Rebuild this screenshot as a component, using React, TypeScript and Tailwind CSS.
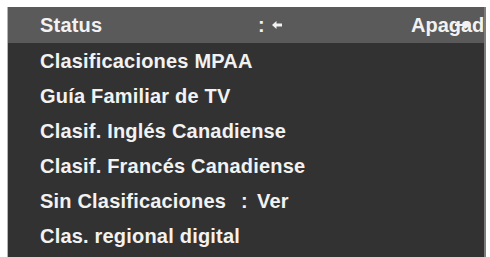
const rows = [
  "Clasificaciones MPAA",
  "Guía Familiar de TV",
  "Clasif. Inglés Canadiense",
  "Clasif. Francés Canadiense",
];

function LeftArrow() {
  return (
    <svg width="10" height="8" viewBox="0 0 10 8" className="shrink-0">
      <path d="M0 4 L4.5 0 L4.5 2.6 L10 2.6 L10 5.4 L4.5 5.4 L4.5 8 Z" fill="#f2f2f2" />
    </svg>
  );
}

export default function App() {
  return (
    <div
      className="w-[490px] h-[257px] bg-white pt-[7px] pl-[7px] pr-[4px] overflow-hidden text-[20px] font-bold text-[#f2f2f2] leading-none tracking-[0.2px]"
      style={{ fontFamily: '"Liberation Sans", Arial, sans-serif' }}
    >
      <div className="h-[260px] bg-[#323232] border-l border-l-[#b4b4b4] border-r-2 border-r-[#7c7c7c]">
        {/* header row */}
        <div className="relative h-[36px] bg-[#5a5a5a] flex items-center pl-[32px] overflow-hidden">
          <span className="w-[218px] shrink-0">Status</span>
          <span className="w-[14px] shrink-0">:</span>
          <LeftArrow />
          <span className="w-[129px] shrink-0" />
          <span className="whitespace-nowrap tracking-normal">Apagado</span>
          <svg width="16" height="8" viewBox="0 0 16 8" className="absolute left-[447px] top-[14px]">
            <path d="M0 3 L10 3 L10 0 L16 4 L10 8 L10 5 L0 5 Z" fill="#f2f2f2" />
          </svg>
        </div>

        {rows.map((r) => (
          <div key={r} className="h-[35px] flex items-center pl-[32px]">
            {r}
          </div>
        ))}

        <div className="h-[35px] flex items-center pl-[32px]">
          <span>Sin Clasificaciones</span>
          <span className="ml-[15px]">:</span>
          <span className="ml-[9px]">Ver</span>
        </div>

        <div className="h-[35px] flex items-center pl-[32px]">Clas. regional digital</div>
      </div>
    </div>
  );
}
